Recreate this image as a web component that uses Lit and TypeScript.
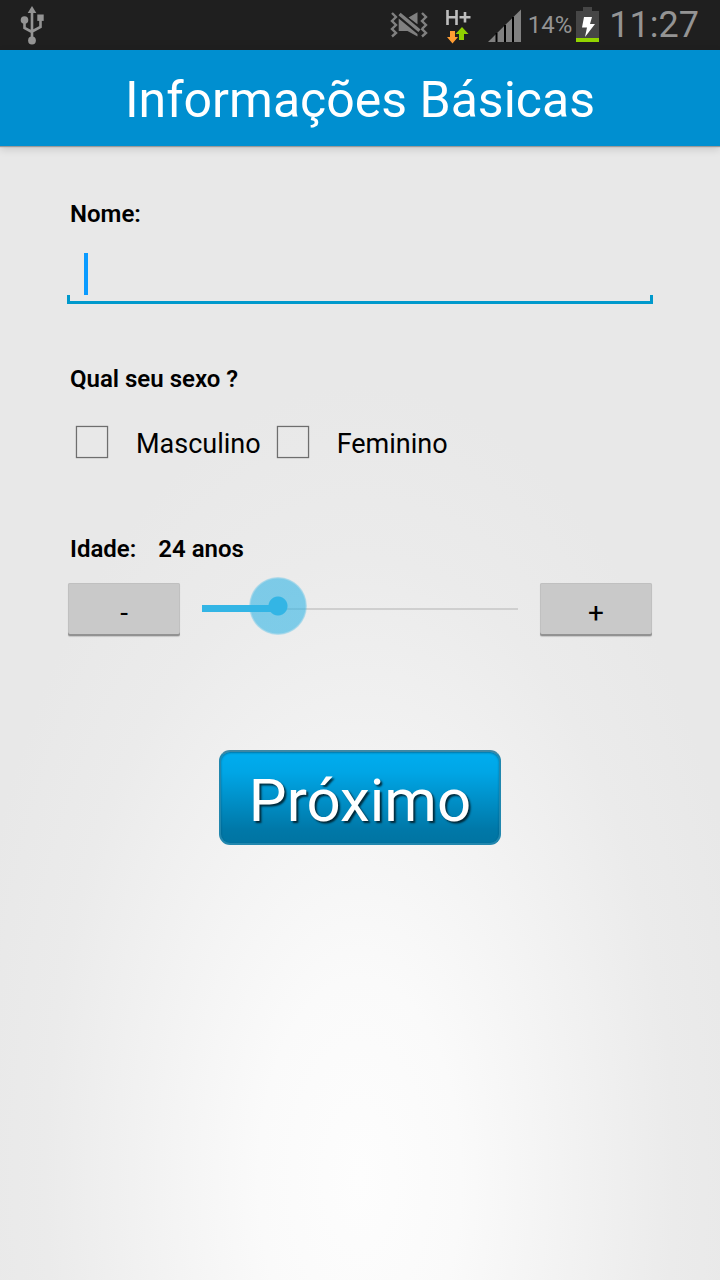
import { LitElement, html, css } from "lit";
import { customElement, state } from "lit/decorators.js";

@customElement("status-bar")
class StatusBar extends LitElement {
  static styles = css`
    :host {
      display: flex;
      align-items: center;
      height: 50px;
      padding: 0 21px 0 20px;
      background: #1f1f1f;
      color: #949494;
      font-family: Roboto, "Liberation Sans", sans-serif;
    }
    svg {
      display: block;
      flex: none;
    }
    .usb {
      margin-right: auto;
    }
    .network {
      margin: 0 17px 0 16px;
    }
    .percent {
      font-size: 24px;
      line-height: 52px;
      margin: 0 4px 0 7px;
    }
    .clock {
      font-size: 36px;
      line-height: 50px;
      margin-left: 10px;
    }
  `;

  render() {
    return html`
      <svg class="usb" width="24" height="50" viewBox="0 0 24 50" fill="#949494" aria-label="USB">
        <path d="M12 6l4.300 7H7.700z" />
        <path d="M12 12v27M4.500 20v8l7.500 4M20.500 18v9L12 31.500" fill="none" stroke="#949494" stroke-width="2.600" />
        <circle cx="4.500" cy="20" r="3.800" />
        <circle cx="12" cy="40.500" r="3.900" />
        <path d="M17.300 14.500h6.400v6.400h-6.400z" />
      </svg>
      <svg width="38" height="50" viewBox="0 0 38 50" aria-label="Vibrar">
        <path d="M2 13l4 4-4 4 4 4-4 4 4 4-4 3.500M32 13l4 4-4 4 4 4-4 4 4 4-4 3.500" fill="none" stroke="#808080" stroke-width="2.400" />
        <path d="M8.700 18.500L27.500 34V36.500L17.500 31H8.700zM18.500 17.500L27.500 12.300v12z" fill="#808080" />
        <path d="M9.500 14L29.500 30.800" stroke="#1f1f1f" stroke-width="6" />
        <path d="M9.500 14L29.500 30.800" stroke="#808080" stroke-width="3.400" />
      </svg>
      <svg class="network" width="27" height="50" viewBox="0 0 27 50" aria-label="H+">
        <path d="M3.500 10v15M12.500 10v15M3.500 17.300h9M15.500 17.300h11M21 12v10.500" fill="none" stroke="#bdbdbd" stroke-width="2.600" />
        <path d="M6 31h5v6h3l-5.500 6.500L3 37h3z" fill="#ff9d33" />
        <path d="M15 40V34h-3.500l6.500-7 6.500 7H20v6z" fill="#8fd000" />
      </svg>
      <svg width="33" height="50" viewBox="0 0 33 50" aria-label="Sinal">
        <path d="M0 42L33 9.500V42z" fill="#808080" />
        <path d="M8.500 33v9M17 25v17M25 17v25" stroke="#000" stroke-width="2" />
      </svg>
      <span class="percent">14%</span>
      <svg width="23" height="50" viewBox="0 0 23 50" aria-label="Bateria">
        <path d="M7 7h9v4h7v27H0V11h7z" fill="#464646" />
        <path d="M0 38h23v4H0z" fill="#92d400" />
        <path d="M8 17h8l-2 7h5L9 37l2-9.500H6z" fill="#fff" />
      </svg>
      <span class="clock">11:27</span>
    `;
  }
}

@customElement("app-root")
class AppRoot extends LitElement {
  static styles = css`
    * {
      box-sizing: border-box;
    }
    :host {
      display: flex;
      flex-direction: column;
      min-height: 100vh;
      font-family: Roboto, "Liberation Sans", sans-serif;
      color: #000;
      background: radial-gradient(ellipse 56% 62% at 50% 92%, #fdfdfd, #fafafa 25%, #ebebeb 78%, #e8e8e8) #e8e8e8;
    }
    header {
      display: flex;
      align-items: center;
      justify-content: center;
      height: 96px;
      padding-top: 4px;
      background: #008fd0;
      box-shadow: 0 1px 1px #9a9a9a, 0 3px 8px rgba(0, 0, 0, 0.15);
      color: #fff;
    }
    h1 {
      margin: 0;
      font-size: 50px;
      font-weight: 400;
      line-height: 60px;
    }
    form {
      display: flex;
      flex-direction: column;
      padding: 52px 68px 0;
    }
    .title {
      margin: 0;
      padding: 0 2px;
      font-size: 24px;
      font-weight: 600;
      line-height: 32px;
    }
    .age-title {
      display: flex;
      gap: 22px;
    }
    .field {
      position: relative;
      margin: 18px -1px 0;
    }
    .name {
      display: block;
      width: 100%;
      height: 56px;
      padding: 0 20px 6px;
      border: 0;
      outline: 0;
      font: 400 28px/40px Roboto, sans-serif;
      caret-color: #0a9bff;
      background:
        linear-gradient(#0099cc, #0099cc) left bottom / 3px 9px no-repeat,
        linear-gradient(#0099cc, #0099cc) right bottom / 3px 9px no-repeat,
        linear-gradient(#0099cc, #0099cc) left bottom / 100% 3px no-repeat;
    }
    .caret {
      position: absolute;
      left: 17px;
      top: 5px;
      width: 4px;
      height: 42px;
      background: #0a9bff;
    }
    fieldset {
      display: block;
      min-width: 0;
      margin: 59px 0 0;
      padding: 0;
      border: 0;
    }
    .options {
      display: flex;
      gap: 16px;
      padding: 31px 8px 0;
    }
    .option {
      display: flex;
      align-items: flex-start;
      gap: 28px;
      font-size: 27px;
      line-height: 36px;
    }
    .option input {
      appearance: none;
      width: 32px;
      height: 32px;
      margin: 0;
      border: 1px solid #6e6e6e;
      box-shadow: 0 0 1px #6e6e6e, inset 0 0 1px #6e6e6e;
    }
    .option input:checked {
      background: #33b5e5;
      box-shadow: inset 0 0 0 5px #e8e8e8;
    }
    .age {
      margin-top: 71px;
    }
    .stepper {
      display: flex;
      align-items: center;
      gap: 22px;
      margin-top: 18px;
    }
    .step {
      position: relative;
      z-index: 1;
      flex: none;
      width: 112px;
      height: 53px;
      padding: 6px 0 0;
      border: 0;
      border-radius: 2px;
      background: #c9c9c9;
      box-shadow: inset 0 -2px 0 #929292, inset 0 0 0 1px #c0c0c0, 0 1px 1px rgba(0, 0, 0, 0.15);
      color: #000;
      font: 400 28px/40px Roboto, sans-serif;
    }
    .range {
      appearance: none;
      flex: 1;
      min-width: 0;
      height: 58px;
      margin: -8px -29px 0;
      background:
        linear-gradient(#33b5e5, #33b5e5) 29px 28px / calc((100% - 58px) * var(--ratio)) 7px no-repeat,
        linear-gradient(#cfcfcf, #cfcfcf) 50% 31px / calc(100% - 58px) 2px no-repeat;
    }
    .range::-webkit-slider-thumb {
      appearance: none;
      width: 58px;
      height: 58px;
      border-radius: 50%;
      background: radial-gradient(circle, #33b5e5 9px, rgba(51, 181, 229, 0.6) 10px, rgba(51, 181, 229, 0.6) 27px, rgba(51, 181, 229, 0.2) 29px);
    }
    .next {
      align-self: center;
      margin-top: 114px;
      padding: 13px 28px 6px;
      border: 2px solid #2187ae;
      border-top-color: #3d86a3;
      border-radius: 11px;
      background: linear-gradient(#00adef, #00a6e6 22%, #0078a8 85%, #0074a2);
      box-shadow: inset 0 1px 2px rgba(0, 60, 90, 0.5);
      color: #fff;
      font: 400 60px/72px Roboto, sans-serif;
      text-shadow: 2px 2px 2px rgba(0, 0, 0, 0.7);
    }
  `;

  @state() private age = 24;

  private step(delta: number) {
    this.age = Math.min(100, Math.max(0, this.age + delta));
  }

  render() {
    return html`
      <status-bar></status-bar>
      <header><h1>Informações Básicas</h1></header>
      <form @submit=${(e: Event) => e.preventDefault()}>
        <label class="title" for="name">Nome:</label>
        <div class="field">
          <input class="name" id="name" type="text" autocomplete="off" />
          <span class="caret"></span>
        </div>
        <fieldset aria-labelledby="sex">
          <p class="title" id="sex">Qual seu sexo ?</p>
          <div class="options">
            <label class="option"><input type="checkbox" name="m" />Masculino</label>
            <label class="option"><input type="checkbox" name="f" />Feminino</label>
          </div>
        </fieldset>
        <div class="age">
          <div class="title age-title">
            <label for="age">Idade:</label>
            <output for="age">${this.age} anos</output>
          </div>
          <div class="stepper">
            <button class="step" type="button" @click=${() => this.step(-1)}>-</button>
            <input
              class="range"
              id="age"
              type="range"
              min="0"
              max="100"
              style="--ratio: ${this.age / 100}"
              .value=${String(this.age)}
              @input=${(e: Event) => (this.age = Number((e.target as HTMLInputElement).value))}
            />
            <button class="step" type="button" @click=${() => this.step(1)}>+</button>
          </div>
        </div>
        <button class="next" type="submit">Próximo</button>
      </form>
    `;
  }
}
